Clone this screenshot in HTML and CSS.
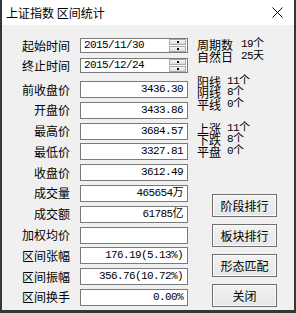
FILE: index.html
```html
<!DOCTYPE html>
<html lang="zh-CN">
<head>
<meta charset="utf-8">
<title>上证指数 区间统计</title>
<link rel="stylesheet" href="styles.css">
</head>
<body>
<div class="window">
  <div class="titlebar">
    <span class="title">上证指数 区间统计</span>
    <svg class="close" width="11" height="11" viewBox="0 0 11 11"><path d="M0.5 0.5 L10.5 10.5 M10.5 0.5 L0.5 10.5" stroke="#000" stroke-width="1"/></svg>
  </div>
  <div class="content">
    <div class="fields">
      <div class="row date-row first">
        <span class="label">起始时间</span>
        <div class="box date"><span class="num">2015/11/30</span><div class="spin"><span class="spin-btn"><i></i></span><span class="spin-btn"><i></i></span></div></div>
      </div>
      <div class="row date-row">
        <span class="label">终止时间</span>
        <div class="box date"><span class="num">2015/12/24</span><div class="spin"><span class="spin-btn"><i></i></span><span class="spin-btn"><i></i></span></div></div>
      </div>
      <div class="values">
        <div class="row"><span class="label">前收盘价</span><div class="box value"><span class="num">3436.30</span></div></div>
        <div class="row"><span class="label">开盘价</span><div class="box value"><span class="num">3433.86</span></div></div>
        <div class="row"><span class="label">最高价</span><div class="box value"><span class="num">3684.57</span></div></div>
        <div class="row"><span class="label">最低价</span><div class="box value"><span class="num">3327.81</span></div></div>
        <div class="row"><span class="label">收盘价</span><div class="box value"><span class="num">3612.49</span></div></div>
        <div class="row"><span class="label">成交量</span><div class="box value"><span class="num">465654万</span></div></div>
        <div class="row"><span class="label">成交额</span><div class="box value"><span class="num">61785亿</span></div></div>
        <div class="row"><span class="label">加权均价</span><div class="box value"><span class="num"></span></div></div>
        <div class="row"><span class="label">区间张幅</span><div class="box value"><span class="num">176.19(5.13%)</span></div></div>
        <div class="row"><span class="label">区间振幅</span><div class="box value"><span class="num">356.76(10.72%)</span></div></div>
        <div class="row"><span class="label">区间换手</span><div class="box value"><span class="num">0.00%</span></div></div>
      </div>
    </div>
    <div class="side">
      <div class="stats stats-period">
        <div class="stat"><span class="stat-label">周期数</span><span class="num">19个</span></div>
        <div class="stat"><span class="stat-label">自然日</span><span class="num">25天</span></div>
      </div>
      <div class="stats stats-lines">
        <div class="stat"><span class="stat-label">阳线</span><span class="num">11个</span></div>
        <div class="stat"><span class="stat-label">阴线</span><span class="num">8个</span></div>
        <div class="stat"><span class="stat-label">平线</span><span class="num">0个</span></div>
      </div>
      <div class="stats stats-moves">
        <div class="stat"><span class="stat-label">上涨</span><span class="num">11个</span></div>
        <div class="stat"><span class="stat-label">下跌</span><span class="num">8个</span></div>
        <div class="stat"><span class="stat-label">平盘</span><span class="num">0个</span></div>
      </div>
      <div class="buttons">
        <button class="btn">阶段排行</button>
        <button class="btn">板块排行</button>
        <button class="btn">形态匹配</button>
        <button class="btn">关闭</button>
      </div>
    </div>
  </div>
</div>
</body>
</html>
```
FILE: styles.css
```css
* { box-sizing: border-box; }
html, body { margin: 0; padding: 0; }
body {
  width: 296px;
  height: 313px;
  overflow: hidden;
  background: #f0f0f0;
  font-family: "Noto Sans CJK SC", "Noto Sans", sans-serif;
  font-size: 12px;
  color: #000;
}
.window {
  width: 296px;
  height: 313px;
  display: flex;
  flex-direction: column;
  border-left: 2px solid #363636;
  border-right: 2px solid #363636;
  border-bottom: 3px solid #363636;
  background: #f0f0f0;
  overflow: hidden;
}
.titlebar {
  height: 25px;
  flex: none;
  background: #fff;
  display: flex;
  align-items: center;
  justify-content: space-between;
  padding-left: 4px;
  padding-right: 11px;
}
.title { font-size: 12px; line-height: 14px; margin-top: 1px; }
.close { display: block; }
.content {
  flex: 1;
  display: flex;
  min-height: 0;
}
.fields {
  width: 186px;
  flex: none;
  padding-top: 13px;
  display: flex;
  flex-direction: column;
}
.row {
  display: grid;
  grid-template-columns: 68px 108px;
  column-gap: 10px;
  align-items: center;
  height: 17px;
}
.label {
  text-align: right;
  line-height: 14px;
  white-space: nowrap;
}
.date-row { height: 15px; margin-bottom: 5px; }
.date-row + .values { margin-top: 3px; }
.values {
  display: flex;
  flex-direction: column;
  gap: 3.8px;
}
.box {
  height: 100%;
  background: #fff;
  border: 1px solid #7a7a7a;
  display: flex;
  align-items: center;
}
.num {
  font-family: "Liberation Mono", "Noto Sans CJK SC", monospace;
  font-size: 11px;
  letter-spacing: -0.6px;
  line-height: 13px;
  white-space: nowrap;
}
.value { justify-content: flex-end; padding-right: 4px; }
.date { padding-left: 3px; padding-right: 1px; justify-content: space-between; }
.spin {
  display: flex;
  flex-direction: column;
  gap: 1px;
  width: 17px;
}
.spin-btn {
  height: 6px;
  border: 1px solid #a9a9a9;
  background: linear-gradient(#f6f6f6, #dcdcdc);
  display: flex;
  align-items: center;
  justify-content: center;
}
.spin-btn i {
  display: block;
  width: 2px;
  height: 2px;
  background: #000;
}
.side {
  flex: 1;
  padding-top: 14px;
  padding-left: 9px;
  display: flex;
  flex-direction: column;
}
.stats { display: flex; flex-direction: column; }
.stat {
  display: flex;
  align-items: center;
  height: 11.5px;
  line-height: 11.5px;
  white-space: nowrap;
}
.stat-label { margin-right: 6px; }
.stats-period .stat-label { margin-right: 8px; }
.stats-lines { margin-top: 13.5px; }
.stats-moves { margin-top: 12.5px; }
.buttons {
  margin-top: 36.5px;
  margin-left: 15px;
  display: flex;
  flex-direction: column;
  gap: 7px;
}
.btn {
  width: 65px;
  height: 23px;
  padding: 0;
  font-family: "Noto Sans CJK SC", sans-serif;
  font-size: 12px;
  color: #000;
  border: 1px solid #707070;
  background: linear-gradient(#f2f2f2, #e6e6e6);
  box-shadow: inset 0 0 0 1px #fafafa;
  flex: none;
}
```
